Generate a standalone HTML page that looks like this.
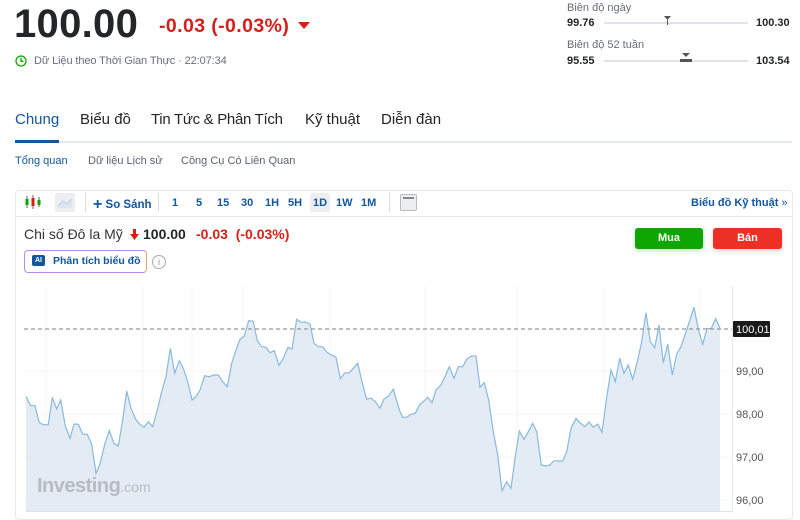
<!DOCTYPE html>
<html><head><meta charset="utf-8"><style>
*{margin:0;padding:0;box-sizing:border-box}
body{width:800px;height:513px;overflow:hidden;background:#fff;font-family:"Liberation Sans",sans-serif;color:#232526;position:relative}
.a{position:absolute;white-space:nowrap}
.tf{font-size:11px;color:#1256a0;font-weight:bold}
</style></head><body>
<div class="a" style="left:14px;top:2px;font-size:40px;font-weight:bold;color:#232526;letter-spacing:0.3px">100.00</div>
<div class="a" style="left:159px;top:15px;font-size:19.5px;font-weight:bold;color:#d91e18;letter-spacing:0.4px">-0.03&nbsp;(-0.03%)</div>
<svg class="a" style="left:298px;top:22px" width="12" height="8"><path d="M0 0H12L6 7Z" fill="#d91e18"/></svg>
<svg class="a" style="left:15px;top:55px" width="12" height="12"><circle cx="6" cy="6" r="5" fill="none" stroke="#0ea600" stroke-width="1.3"/><path d="M6 3V6.3H8.5" fill="none" stroke="#0ea600" stroke-width="1.3"/></svg>
<div class="a" style="left:34px;top:55px;font-size:11px;color:#6a6d78;letter-spacing:-0.1px">Dữ Liệu theo Thời Gian Thực · 22:07:34</div>

<div class="a" style="left:567px;top:2px;font-size:11px;color:#6a6d78">Biên độ ngày</div>
<div class="a" style="left:567px;top:17px;font-size:11px;font-weight:bold">99.76</div>
<div class="a" style="left:604px;top:22px;width:144px;height:2px;background:#e2e4e9"></div>
<svg class="a" style="left:664px;top:16px" width="7" height="9"><path d="M0 0H7L3.5 4Z M3 4H4V9H3Z" fill="#555"/></svg>
<div class="a" style="left:756px;top:17px;font-size:11px;font-weight:bold">100.30</div>
<div class="a" style="left:567px;top:39px;font-size:11px;color:#6a6d78">Biên độ 52 tuần</div>
<div class="a" style="left:567px;top:55px;font-size:11px;font-weight:bold">95.55</div>
<div class="a" style="left:604px;top:60px;width:144px;height:2px;background:#e2e4e9"></div>
<div class="a" style="left:680px;top:59px;width:12px;height:3px;background:#555"></div>
<svg class="a" style="left:682px;top:53px" width="8" height="5"><path d="M0 0H8L4 4Z" fill="#555"/></svg>
<div class="a" style="left:756px;top:55px;font-size:11px;font-weight:bold">103.54</div>

<div class="a" style="left:15px;top:111px;font-size:15px;color:#1256a0">Chung</div>
<div class="a" style="left:80px;top:111px;font-size:15px">Biểu đồ</div>
<div class="a" style="left:151px;top:111px;font-size:15px;letter-spacing:-0.3px">Tin Tức &amp; Phân Tích</div>
<div class="a" style="left:305px;top:111px;font-size:15px">Kỹ thuật</div>
<div class="a" style="left:381px;top:111px;font-size:15px">Diễn đàn</div>
<div class="a" style="left:15px;top:141px;width:777px;height:2px;background:#e6e9eb"></div>
<div class="a" style="left:15px;top:140px;width:44px;height:3px;background:#1256a0"></div>
<div class="a" style="left:15px;top:155px;font-size:11px;color:#1256a0">Tổng quan</div>
<div class="a" style="left:88px;top:155px;font-size:11px;color:#5b616e">Dữ liệu Lịch sử</div>
<div class="a" style="left:181px;top:155px;font-size:11px;color:#5b616e">Công Cụ Có Liên Quan</div>

<div class="a" style="left:15px;top:190px;width:778px;height:330px;border:1px solid #e6e9eb;border-radius:4px"></div>
<div class="a" style="left:16px;top:216px;width:776px;height:1px;background:#e6e9eb"></div>
<svg class="a" style="left:24px;top:194px" width="18" height="16"><g stroke-width="1"><path d="M3 2V14M9 1V15M15 3V13" stroke="#666"/><rect x="1.5" y="5" width="3" height="6" fill="#0ea600"/><rect x="7.5" y="4" width="3" height="8" fill="#d91e18"/><rect x="13.5" y="6" width="3" height="5" fill="#0ea600"/></g></svg>
<div class="a" style="left:55px;top:193px;width:20px;height:19px;background:#eceef2;border-radius:2px"></div>
<svg class="a" style="left:57px;top:196px" width="16" height="12"><path d="M1 10L6 5L10 8L15 3" fill="none" stroke="#9ab8d6" stroke-width="1"/><path d="M1 10L6 5L10 8L15 3V12H1Z" fill="#dbe6f1"/></svg>
<div class="a" style="left:85px;top:193px;width:1px;height:19px;background:#ddd"></div>
<div class="a" style="left:93px;top:195px;font-size:11.5px;color:#1256a0;font-weight:bold"><span style="font-size:16px;position:relative;top:1px">+</span> So Sánh</div>
<div class="a" style="left:158px;top:193px;width:1px;height:19px;background:#ddd"></div>
<div class="a tf" style="left:172px;top:197px">1</div>
<div class="a tf" style="left:196px;top:197px">5</div>
<div class="a tf" style="left:217px;top:197px">15</div>
<div class="a tf" style="left:241px;top:197px">30</div>
<div class="a tf" style="left:265px;top:197px">1H</div>
<div class="a tf" style="left:288px;top:197px">5H</div>
<div class="a" style="left:310px;top:193px;width:20px;height:19px;background:#eceef2;border-radius:2px"></div>
<div class="a tf" style="left:313px;top:197px">1D</div>
<div class="a tf" style="left:336px;top:197px">1W</div>
<div class="a tf" style="left:361px;top:197px">1M</div>
<div class="a" style="left:389px;top:193px;width:1px;height:19px;background:#ddd"></div>
<div class="a" style="left:400px;top:194px;width:17px;height:17px;background:#eceef2;border:1px solid #bbb;border-radius:2px"></div>
<div class="a" style="left:403px;top:197px;width:11px;height:2px;background:#888"></div>
<div class="a" style="left:691px;top:197px;font-size:11px;color:#1256a0;font-weight:bold">Biểu đồ Kỹ thuật <span style="font-weight:normal">»</span></div>

<div class="a" style="left:24px;top:226px;font-size:14px;color:#333">Chi số Đô la Mỹ</div>
<svg class="a" style="left:130px;top:229px" width="9" height="11"><path d="M3 0H6V5H9L4.5 11L0 5H3Z" fill="#d91e18"/></svg>
<div class="a" style="left:143px;top:226px;font-size:14px;font-weight:bold">100.00</div>
<div class="a" style="left:196px;top:226px;font-size:14px;color:#d91e18;font-weight:bold">-0.03&nbsp;&nbsp;(-0.03%)</div>
<div class="a" style="left:24px;top:250px;width:123px;height:23px;border:1px solid #b48cf0;border-right-color:#f5a05a;border-radius:4px;background:#fff"></div>
<div class="a" style="left:32px;top:255px;width:13px;height:11px;background:#1256a0;border-radius:2px;color:#fff;font-size:7px;font-weight:bold;text-align:center;line-height:11px">AI</div>
<div class="a" style="left:53px;top:255px;font-size:10.5px;font-weight:bold;color:#1256a0">Phân tích biểu đồ</div>
<div class="a" style="left:152px;top:255px;width:14px;height:14px;border:1px solid #aaa;border-radius:50%;color:#999;font-size:9px;text-align:center;line-height:12px">i</div>

<div class="a" style="left:635px;top:228px;width:68px;height:21px;background:#0ea600;border-radius:3px;color:#fff;font-size:11px;font-weight:bold;text-align:center;line-height:21px;box-shadow:0 2px 5px rgba(14,166,0,.25)">Mua</div>
<div class="a" style="left:713px;top:228px;width:69px;height:21px;background:#ec3025;border-radius:3px;color:#fff;font-size:11px;font-weight:bold;text-align:center;line-height:21px;box-shadow:0 2px 5px rgba(236,48,37,.25)">Bán</div>

<svg class="a" style="left:0;top:0" width="800" height="513">
<g stroke="#f5f6f8" stroke-width="1"><path d="M46 286V511M143 286V511M192 286V511M243 286V511M330 286V511M425 286V511M517 286V511M604 286V511M700 286V511M24 371H732M24 414H732M24 457H732M24 500H732"/></g>
<path d="M26,396.7 30.7,405.7 35,405.7 39.3,422.7 43.3,424.7 48.3,424.7 52.3,397.3 56.7,409 60.7,400 65.3,426 70,438.3 74,424 78.3,424.3 82.7,434.3 87.3,434.3 91.7,444.3 96,473.3 100,464 105,443.3 109.3,430.7 114,443.3 118.3,446 122.7,420 126.7,391 131,408.3 135.7,419.3 140,424.3 144,427.3 148.3,421.7 152.7,426.7 157.3,410 161.7,391.7 166,376.7 170.3,348.3 174.7,373.3 179.3,360.7 183.3,368.3 187.7,381.7 192,400 196,396.7 200,390 204.7,375.7 209,376.7 213.7,375 218.3,375 222.7,381.7 227.3,386.7 231.7,363.3 236,350 240,339.3 244.3,336 248.7,320.7 253.3,321.3 257.3,340.7 261.7,346.7 266,347.3 270,352.7 274.3,350.7 279,365.3 283.3,358.3 288,347.3 292,349 296.7,319.3 301,322.3 305.3,322 310,324 314,343.3 318.3,346.7 322.7,346.7 327.3,352.7 331.7,355 336,357.3 340.3,378.7 344.7,373 349,373 353.3,368.3 357.7,363.3 362,381.7 366.7,399.3 371,398 375.3,401.7 380,408.3 384,399 388.7,396 393.3,389.3 400,411.7 402.7,417.3 406.7,417.3 411,414.3 415.3,413.3 419.3,405 423.3,401.7 427.7,397.3 432,402.7 436,390 440.7,385.3 445,376.7 449.3,366.7 454,378.3 458.3,366.7 462.7,366.7 466.7,359.3 471.3,356 476,356 480,387.3 484.3,382.7 488.7,400 493.3,431.7 497.7,455 502,490.7 506.7,481.7 511,488.3 515,458.3 519.3,431 524,439.3 528.3,431.7 532.7,423.3 536.7,431.7 541.3,465 546,466 550,465 554,460.7 558.3,461 562.7,461 566.7,451.7 571,428.3 576,418.3 580,422.7 584.7,426.7 589,422 593.3,427.3 597.7,424 602,432.3 606.7,397.3 611,370 615.3,381.7 619.7,358.3 624,373.3 628.3,365 632.7,379.3 637.3,361.7 641.7,341.7 646,312.7 650.3,341.7 654.7,347.7 659,325 663.3,362.7 667.7,344 672.3,375 676.7,354 681,346.7 685.3,334 689.7,320.7 694,307.3 698.3,329.3 702.7,344.3 707,328.7 711.3,328.3 715.7,318.7 720,328.3 720,511 26,511Z" fill="#e3ecf4"/>
<polyline fill="none" stroke="#8ab9dd" stroke-width="1.2" points="26,396.7 30.7,405.7 35,405.7 39.3,422.7 43.3,424.7 48.3,424.7 52.3,397.3 56.7,409 60.7,400 65.3,426 70,438.3 74,424 78.3,424.3 82.7,434.3 87.3,434.3 91.7,444.3 96,473.3 100,464 105,443.3 109.3,430.7 114,443.3 118.3,446 122.7,420 126.7,391 131,408.3 135.7,419.3 140,424.3 144,427.3 148.3,421.7 152.7,426.7 157.3,410 161.7,391.7 166,376.7 170.3,348.3 174.7,373.3 179.3,360.7 183.3,368.3 187.7,381.7 192,400 196,396.7 200,390 204.7,375.7 209,376.7 213.7,375 218.3,375 222.7,381.7 227.3,386.7 231.7,363.3 236,350 240,339.3 244.3,336 248.7,320.7 253.3,321.3 257.3,340.7 261.7,346.7 266,347.3 270,352.7 274.3,350.7 279,365.3 283.3,358.3 288,347.3 292,349 296.7,319.3 301,322.3 305.3,322 310,324 314,343.3 318.3,346.7 322.7,346.7 327.3,352.7 331.7,355 336,357.3 340.3,378.7 344.7,373 349,373 353.3,368.3 357.7,363.3 362,381.7 366.7,399.3 371,398 375.3,401.7 380,408.3 384,399 388.7,396 393.3,389.3 400,411.7 402.7,417.3 406.7,417.3 411,414.3 415.3,413.3 419.3,405 423.3,401.7 427.7,397.3 432,402.7 436,390 440.7,385.3 445,376.7 449.3,366.7 454,378.3 458.3,366.7 462.7,366.7 466.7,359.3 471.3,356 476,356 480,387.3 484.3,382.7 488.7,400 493.3,431.7 497.7,455 502,490.7 506.7,481.7 511,488.3 515,458.3 519.3,431 524,439.3 528.3,431.7 532.7,423.3 536.7,431.7 541.3,465 546,466 550,465 554,460.7 558.3,461 562.7,461 566.7,451.7 571,428.3 576,418.3 580,422.7 584.7,426.7 589,422 593.3,427.3 597.7,424 602,432.3 606.7,397.3 611,370 615.3,381.7 619.7,358.3 624,373.3 628.3,365 632.7,379.3 637.3,361.7 641.7,341.7 646,312.7 650.3,341.7 654.7,347.7 659,325 663.3,362.7 667.7,344 672.3,375 676.7,354 681,346.7 685.3,334 689.7,320.7 694,307.3 698.3,329.3 702.7,344.3 707,328.7 711.3,328.3 715.7,318.7 720,328.3"/>
<path d="M24 329H732" stroke="#999" stroke-width="1.3" stroke-dasharray="4 3"/>
<path d="M732.5 286V513" stroke="#e6e9eb"/>
<path d="M26 511.5H732" stroke="#dde3ea"/>
<rect x="733" y="321" width="37" height="16" fill="#1a1a1a" rx="1"/>
<text x="736" y="333" font-family="Liberation Sans" font-size="11" fill="#fff">100,01</text>
<g font-family="Liberation Sans" font-size="11" fill="#555"><text x="736" y="375">99,00</text><text x="736" y="418">98,00</text><text x="736" y="461">97,00</text><text x="736" y="504">96,00</text></g>
<text x="37" y="492" font-family="Liberation Sans" font-size="20" font-weight="bold" fill="#b8bcc2" letter-spacing="-0.5">Investing<tspan font-size="14" font-weight="normal" letter-spacing="0">.com</tspan></text>
</svg>
</body></html>
